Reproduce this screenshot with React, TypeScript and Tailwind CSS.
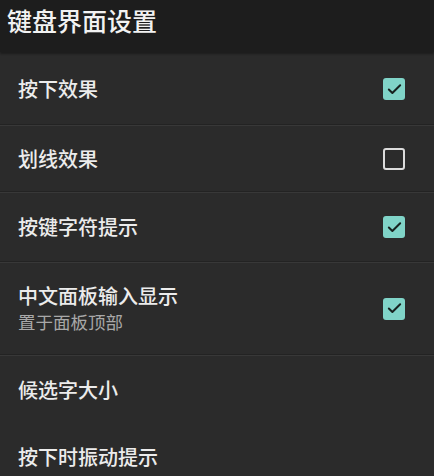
import { Check } from 'lucide-react';

type Row = {
  title: string;
  subtitle?: string;
  checked?: boolean;
  height: string;
  divider?: boolean;
};

const rows: Row[] = [
  { title: '按下效果', checked: true, height: 'h-[70px]', divider: true },
  { title: '划线效果', checked: false, height: 'h-[65px]', divider: true },
  { title: '按键字符提示', checked: true, height: 'h-[68px]', divider: true },
  { title: '中文面板输入显示', subtitle: '置于面板顶部', checked: true, height: 'h-[91px]', divider: true },
  { title: '候选字大小', height: 'h-[67px]' },
  { title: '按下时振动提示', height: 'h-[67px]' },
];

function CheckBox({ checked }: { checked: boolean }) {
  if (checked) {
    return (
      <div className="w-[22px] h-[22px] rounded-[3px] bg-[#80d4c8] flex items-center justify-center">
        <Check className="w-[17px] h-[17px] text-[#17221f]" strokeWidth={2.8} />
      </div>
    );
  }
  return <div className="w-[22px] h-[22px] rounded-[3px] border-[2.5px] border-[#dcdcdc]" />;
}

export default function App() {
  return (
    <div
      className="w-[434px] h-[476px] overflow-hidden bg-[#2b2b2b] text-[#ececec]"
      style={{ fontFamily: '"Noto Sans CJK SC", "Noto Sans", sans-serif' }}
    >
      <div className="h-[52px] bg-[#1d1d1d] pl-[7px] pt-[4px] shadow-[0_2px_2px_rgba(0,0,0,0.35)]">
        <h1 className="text-[25px] leading-[32px] font-medium text-[#f2f2f2]">键盘界面设置</h1>
      </div>
      <div className="pt-[2px]">
        {rows.map((row) => (
          <div key={row.title}>
            <div className={`${row.height} flex items-center justify-between pl-[18px] pr-[29px]`}>
              <div className="flex flex-col">
                <span className="text-[20px] leading-[26px] font-medium">{row.title}</span>
                {row.subtitle && (
                  <span className="text-[17.5px] leading-[24px] text-[#a8a8a8] mt-[1px]">{row.subtitle}</span>
                )}
              </div>
              {row.checked !== undefined && <CheckBox checked={row.checked} />}
            </div>
            {row.divider && <div className="h-[2px] bg-[#383838] border-t border-[#232323]" />}
          </div>
        ))}
      </div>
    </div>
  );
}
